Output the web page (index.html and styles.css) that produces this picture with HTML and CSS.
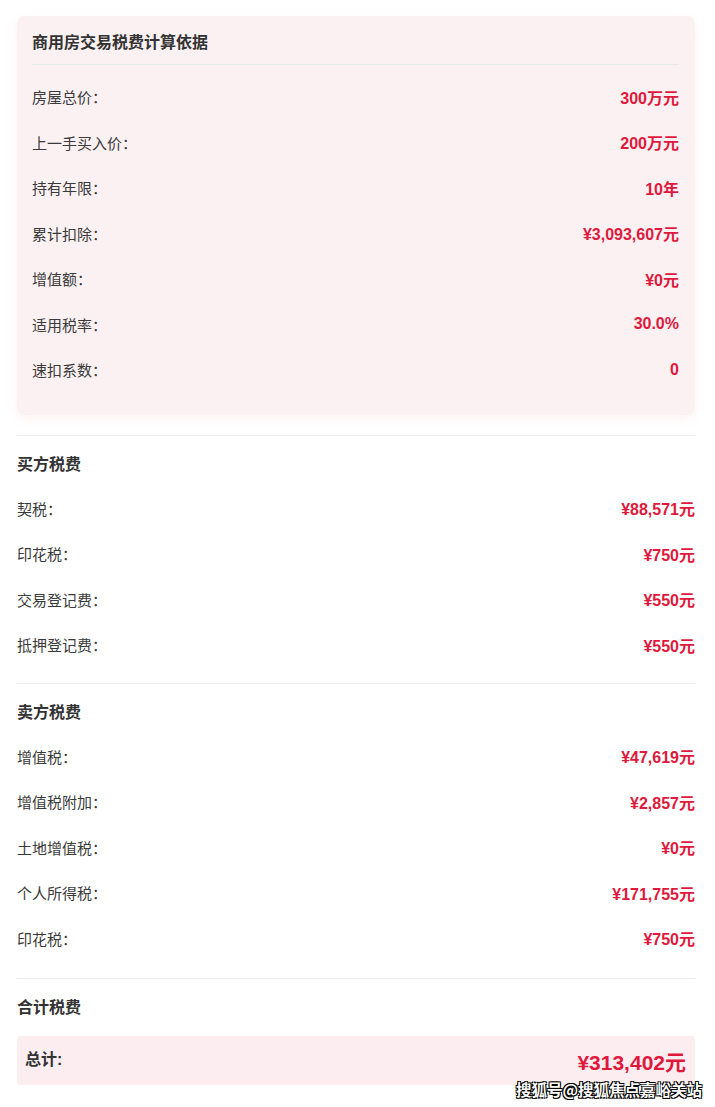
FILE: index.html
```html
<!DOCTYPE html>
<html lang="zh-CN">
<head>
    <meta charset="UTF-8">
    <meta name="viewport" content="width=device-width, initial-scale=1.0">
    <title>商用房交易税费计算</title>
    <link rel="stylesheet" href="styles.css">
</head>
<body>

    <div class="page">
        <div class="basis-card">
            <h2 class="card-title">商用房交易税费计算依据</h2>
            <div class="row"><span class="label">房屋总价：</span><span class="value">300万元</span></div>
            <div class="row"><span class="label">上一手买入价：</span><span class="value">200万元</span></div>
            <div class="row"><span class="label">持有年限：</span><span class="value">10年</span></div>
            <div class="row"><span class="label">累计扣除：</span><span class="value">¥3,093,607元</span></div>
            <div class="row"><span class="label">增值额：</span><span class="value">¥0元</span></div>
            <div class="row"><span class="label">适用税率：</span><span class="value">30.0%</span></div>
            <div class="row"><span class="label">速扣系数：</span><span class="value">0</span></div>
        </div>

        <div class="section section-first">
            <h3 class="section-title">买方税费</h3>
            <div class="row"><span class="label">契税：</span><span class="value">¥88,571元</span></div>
            <div class="row"><span class="label">印花税：</span><span class="value">¥750元</span></div>
            <div class="row"><span class="label">交易登记费：</span><span class="value">¥550元</span></div>
            <div class="row"><span class="label">抵押登记费：</span><span class="value">¥550元</span></div>
        </div>

        <div class="section">
            <h3 class="section-title">卖方税费</h3>
            <div class="row"><span class="label">增值税：</span><span class="value">¥47,619元</span></div>
            <div class="row"><span class="label">增值税附加：</span><span class="value">¥2,857元</span></div>
            <div class="row"><span class="label">土地增值税：</span><span class="value">¥0元</span></div>
            <div class="row"><span class="label">个人所得税：</span><span class="value">¥171,755元</span></div>
            <div class="row"><span class="label">印花税：</span><span class="value">¥750元</span></div>
        </div>

        <div class="section section-total">
            <h3 class="section-title">合计税费</h3>
            <div class="total-box">
                <span class="total-label">总计:</span>
                <span class="total-value">¥313,402元</span>
            </div>
        </div>
    </div>

    <div class="watermark">搜狐号@搜狐焦点嘉峪关站</div>

</body>
</html>
```

FILE: styles.css
```css
body {
    margin: 0;
    font-family: "Liberation Sans", "Noto Sans CJK SC", sans-serif;
    background-color: #fff;
    color: #333;
}
.page {
    padding: 16px 20px 0 17px;
}
.basis-card {
    background-color: #fbf1f3;
    border-radius: 8px;
    padding: 16px 16px 22px 15px;
    box-shadow: 0px 4px 14px rgba(230, 40, 70, 0.06);
}
.card-title {
    margin: 0 0 9px;
    padding-bottom: 10px;
    border-bottom: 1px solid #e6e9ea;
    font-size: 16px;
    line-height: 22px;
    font-weight: bold;
    color: #333;
}
.row {
    display: flex;
    justify-content: space-between;
    align-items: center;
    height: 45.5px;
    font-size: 15px;
}
.label {
    color: #3a3a3a;
}
.value {
    color: #e0183c;
    font-size: 16px;
    font-weight: bold;
}
.section {
    margin-top: 15px;
    padding-top: 18px;
    border-top: 1px solid #ececec;
}
.section-first {
    margin-top: 20px;
}
.section-title {
    margin: 0 0 10px;
    font-size: 16px;
    line-height: 22px;
    font-weight: bold;
    color: #333;
}
.section-total {
    margin-top: 17px;
}
.section-total .section-title {
    margin-bottom: 17px;
}
.total-box {
    display: flex;
    justify-content: space-between;
    align-items: center;
    height: 49px;
    padding: 0 9px 0 8px;
    background-color: #fcedf0;
    border-radius: 4px;
}
.total-label {
    font-size: 16px;
    font-weight: bold;
    color: #333;
    margin-top: -5px;
}
.total-value {
    font-size: 21px;
    font-weight: bold;
    color: #e0183c;
}
.watermark {
    position: absolute;
    left: 516px;
    top: 1078px;
    font-family: "Noto Sans CJK SC", sans-serif;
    font-size: 15.5px;
    font-weight: bold;
    color: #fff;
    text-shadow: 1px 1px 0 #000, -1px -1px 0 #000, 1px -1px 0 #000, -1px 1px 0 #000;
}
```
